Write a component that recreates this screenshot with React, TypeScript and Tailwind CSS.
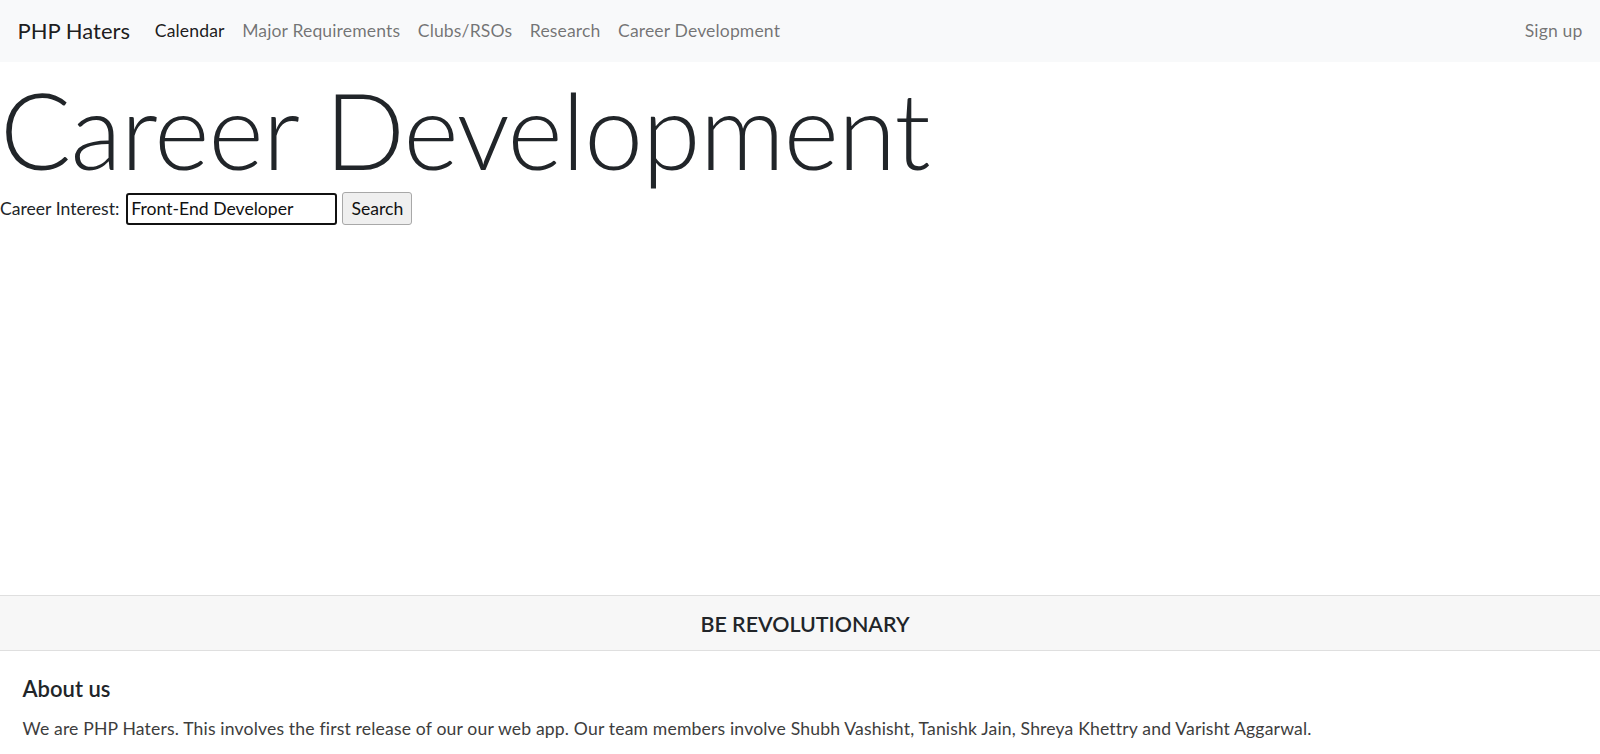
import React from "react";

const FONT = "font-['Segoe_UI',Lato,'Open_Sans',sans-serif]";

export default function App() {
  return (
    <div className={`${FONT} bg-white text-[#212529] min-h-screen`}>
      <nav className="h-[61.6px] bg-[#f8f9fa] flex items-center pl-[17.6px] pr-[17.6px]">
        <a className="text-[22px] leading-[33px] text-[rgba(0,0,0,0.9)] mr-[16px]">PHP Haters</a>
        <ul className="flex items-center text-[17.6px] leading-[26.4px] tracking-[0.12px]">
          <li className="px-[8.8px] text-[rgba(0,0,0,0.9)]">Calendar</li>
          <li className="px-[8.8px] text-[rgba(0,0,0,0.55)]">Major Requirements</li>
          <li className="px-[8.8px] text-[rgba(0,0,0,0.55)]">Clubs/RSOs</li>
          <li className="px-[8.8px] text-[rgba(0,0,0,0.55)]">Research</li>
          <li className="px-[8.8px] text-[rgba(0,0,0,0.55)]">Career Development</li>
        </ul>
        <div className="ml-auto text-[17.6px] leading-[26.4px] tracking-[0.12px] text-[rgba(0,0,0,0.55)]">Sign up</div>
      </nav>

      <main className="h-[533.4px] pt-[4px]">
        <h1 className="text-[105.6px] leading-[1.2] font-light tracking-[-0.85px] whitespace-nowrap">Career Development</h1>
        <div className="flex items-center h-[33px] text-[17.6px] leading-[26.4px]">
          <span>Career Interest:</span>
          <div className="ml-[7px] w-[211px] h-[32px] border-2 border-[#111] rounded-[3px] flex items-center pl-[3px] text-[#111]">
            Front-End Developer
          </div>
          <button className="ml-[5px] w-[70px] h-[33px] bg-[#efefef] border border-[#a8a8a8] rounded-[3px] text-[#111] flex items-center justify-center">
            Search
          </button>
        </div>
      </main>

      <footer>
        <div className="border-t border-b border-[#dfdfdf] bg-[#f7f7f7] h-[56px] pt-[2px] flex items-center justify-center">
          <span className="text-[21.4px] font-semibold leading-[26.4px] uppercase text-[#212529] ml-[10px]">BE REVOLUTIONARY</span>
        </div>
        <div className="px-[22.5px] pt-[25px]">
          <h5 className="text-[22px] font-semibold leading-[26.4px] mb-[14px]">About us</h5>
          <p className="text-[17.6px] leading-[26.4px] tracking-[0.16px] text-[#3d3d3d]">
            We are PHP Haters. This involves the first release of our our web app. Our team members involve Shubh Vashisht, Tanishk Jain, Shreya Khettry and Varisht Aggarwal.
          </p>
        </div>
      </footer>
    </div>
  );
}
